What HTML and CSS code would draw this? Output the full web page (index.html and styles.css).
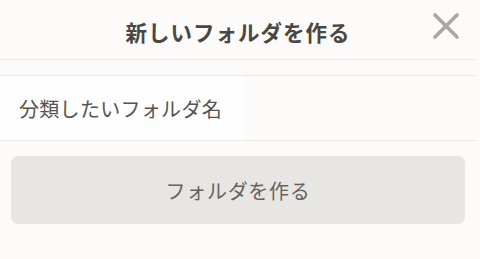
FILE: index.html
```html
<!DOCTYPE html>
<html lang="ja">
<head>
    <meta charset="UTF-8">
    <meta name="viewport" content="width=device-width, initial-scale=1.0">
    <title>新しいフォルダを作る</title>
    <link rel="stylesheet" href="styles.css">
</head>
<body>
    <div class="sheet">
        <div class="header">
            <h1>新しいフォルダを作る</h1>
            <button class="close" aria-label="閉じる">
                <svg width="28" height="28" viewBox="0 0 28 28">
                    <path d="M3 3 L25 25 M25 3 L3 25" stroke="#a9a79e" stroke-width="3.6" stroke-linecap="round"/>
                </svg>
            </button>
        </div>

        <div class="gap-band"></div>

        <div class="field-row">
            <input class="field" type="text" placeholder="分類したいフォルダ名">
        </div>

        <div class="actions">
            <button class="submit">フォルダを作る</button>
        </div>
    </div>
</body>
</html>
```

FILE: styles.css
```css
* {
    box-sizing: border-box;
    margin: 0;
    padding: 0;
    font-family: "Noto Sans CJK JP", "Noto Sans", sans-serif;
}

body {
    background: #fcfbfa;
    width: 480px;
    height: 259px;
    overflow: hidden;
}

.sheet {
    width: 476px;
}

.header {
    position: relative;
    height: 60px;
    display: flex;
    align-items: center;
    justify-content: center;
    border-bottom: 1px solid #ebe9e4;
}

.header h1 {
    font-size: 21.5px;
    font-weight: 700;
    color: #4a4740;
    letter-spacing: 1px;
    margin-top: 4px;
}

.close {
    position: absolute;
    right: 16px;
    top: 12px;
    background: none;
    border: none;
    width: 28px;
    height: 28px;
}

.gap-band {
    height: 16px;
    background: #fbfaf8;
    border-bottom: 1px solid #ebe9e4;
}

.field-row {
    height: 65px;
    display: flex;
    align-items: stretch;
    background: #fcfbfa;
    border-bottom: 1px solid #ebe9e4;
}

.field {
    width: 245px;
    border: none;
    outline: none;
    background: #fefefe;
    padding: 0 0 0 19px;
    font-size: 20px;
    color: #555;
    letter-spacing: 0.3px;
}

.field::placeholder {
    color: #555350;
}

.actions {
    padding: 15px 11px 0 11px;
}

.submit {
    width: 454px;
    height: 68px;
    border: none;
    border-radius: 7px;
    background: #e7e6e2;
    color: #66635c;
    font-size: 20px;
    letter-spacing: 0.7px;
}
```
